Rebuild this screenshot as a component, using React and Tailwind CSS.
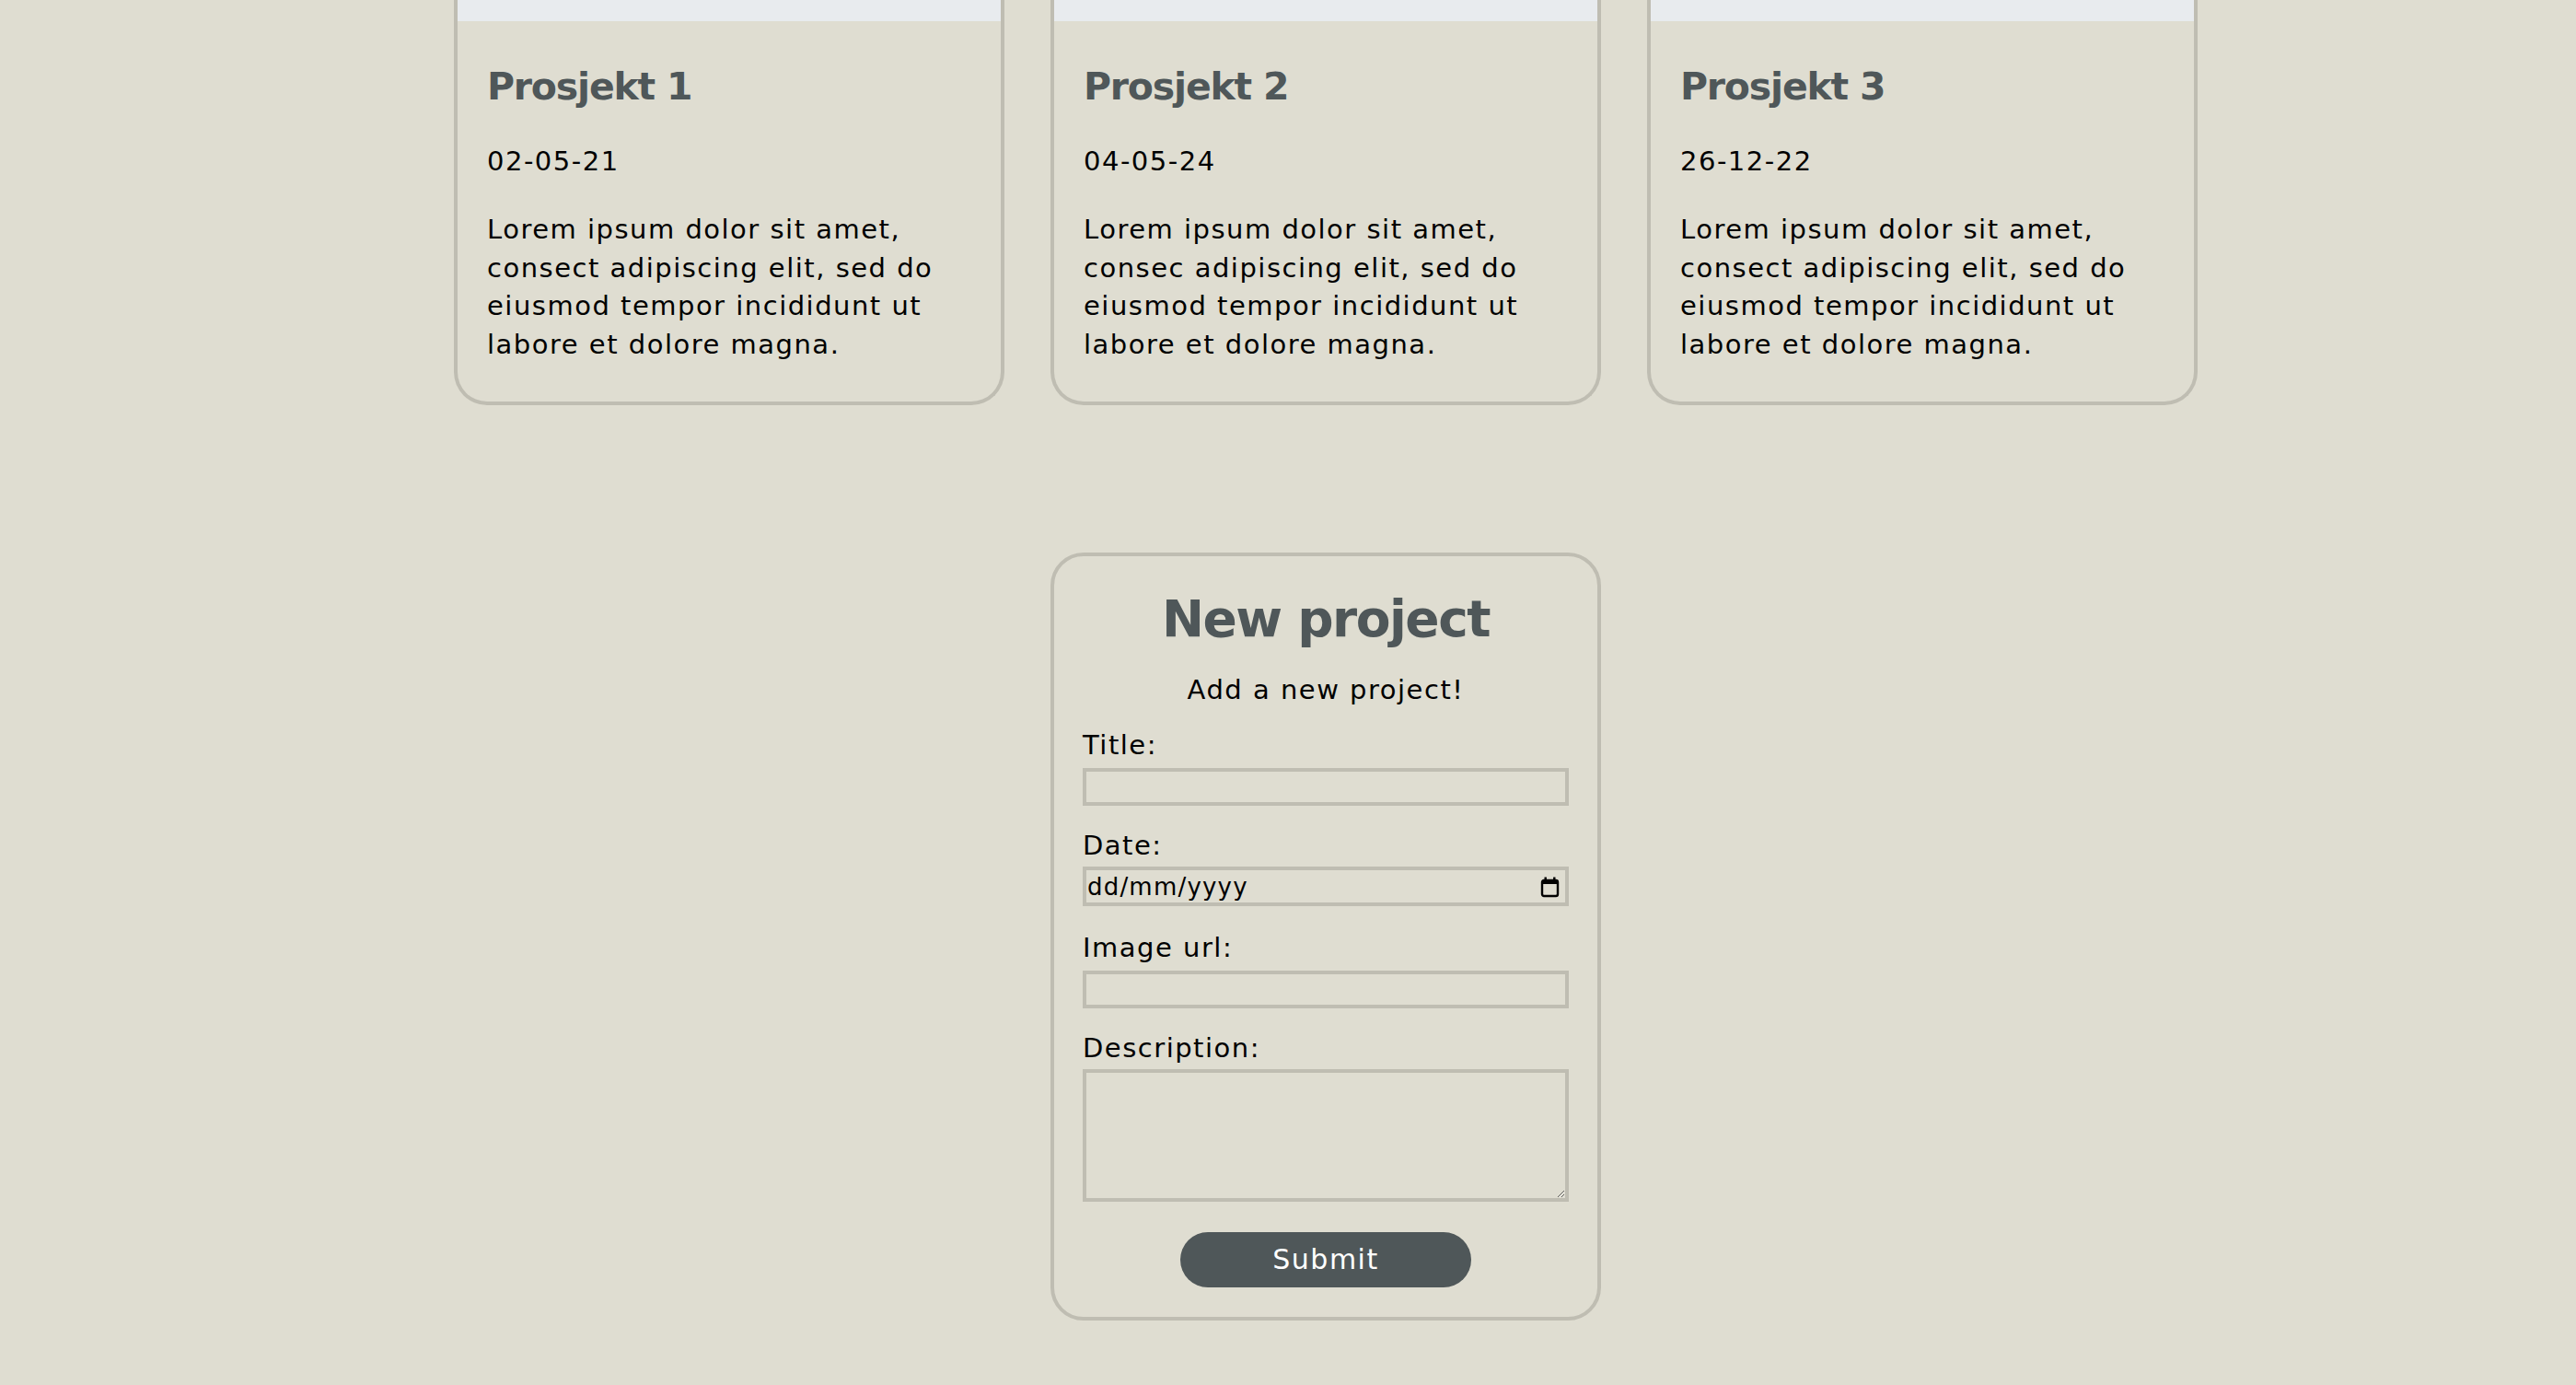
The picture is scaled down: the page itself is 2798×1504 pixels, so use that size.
const projects = [
  {
    title: "Prosjekt 1",
    date: "02-05-21",
    lines: [
      "Lorem ipsum dolor sit amet,",
      "consect adipiscing elit, sed do",
      "eiusmod tempor incididunt ut",
      "labore et dolore magna.",
    ],
  },
  {
    title: "Prosjekt 2",
    date: "04-05-24",
    lines: [
      "Lorem ipsum dolor sit amet,",
      "consec adipiscing elit, sed do",
      "eiusmod tempor incididunt ut",
      "labore et dolore magna.",
    ],
  },
  {
    title: "Prosjekt 3",
    date: "26-12-22",
    lines: [
      "Lorem ipsum dolor sit amet,",
      "consect adipiscing elit, sed do",
      "eiusmod tempor incididunt ut",
      "labore et dolore magna.",
    ],
  },
];

function CalendarIcon() {
  return (
    <svg width="21" height="24" viewBox="0 0 21 24" fill="none">
      <rect x="2" y="5" width="17" height="17" rx="2" stroke="#000" strokeWidth="2.4" />
      <rect x="2" y="5" width="17" height="4" fill="#000" />
      <rect x="4.5" y="1.5" width="2.4" height="4" fill="#000" />
      <rect x="14.1" y="1.5" width="2.4" height="4" fill="#000" />
    </svg>
  );
}

function Card({ p }) {
  return (
    <div className="w-[598px] border-4 border-t-0 border-[#bfbdb2] rounded-b-[36px] overflow-hidden">
      <div className="h-[23px] bg-[#e8ebee]" />
      <div className="px-[32px] pb-[41px]">
        <h2 className="mt-[45px] text-[41px] font-bold leading-[52px] text-[#4f5759] tracking-[-1.2px]">
          {p.title}
        </h2>
        <p className="mt-[34px] leading-[42px]">{p.date}</p>
        <p className="mt-[33px] leading-[41.6px]">
          {p.lines.map((l, i) => (
            <span key={i} className="block whitespace-nowrap">
              {l}
            </span>
          ))}
        </p>
      </div>
    </div>
  );
}

export default function App() {
  return (
    <div className="min-h-screen bg-[#dfddd1] text-black font-['DejaVu_Sans',sans-serif] text-[29px] tracking-[1.5px] flex flex-col items-center pl-[82px]">
      <div className="flex gap-[50px]">
        {projects.map((p) => (
          <Card key={p.title} p={p} />
        ))}
      </div>

      <form
        className="mt-[160px] w-[598px] border-4 border-[#bfbdb2] rounded-[36px] px-[31px] pt-[33px] pb-[32px] flex flex-col"
        onSubmit={(e) => e.preventDefault()}
      >
        <h1 className="text-center text-[55px] font-bold leading-[70px] text-[#4f5759] tracking-[-1.5px]">
          New project
        </h1>
        <p className="mt-[21px] leading-[42px] text-center">Add a new project!</p>

        <label className="mt-[18px] leading-[42px]">Title:</label>
        <input
          type="text"
          className="mt-[4px] h-[41px] border-4 border-[#bfbdb2] bg-transparent outline-none px-[4px]"
        />

        <label className="mt-[22px] leading-[42px]">Date:</label>
        <div className="mt-[2px] h-[43px] border-4 border-[#bfbdb2] flex items-center justify-between pl-[1px] pr-[6px]">
          <span className="text-[26px] tracking-[1.2px] leading-none">dd/mm/yyyy</span>
          <CalendarIcon />
        </div>

        <label className="mt-[24px] leading-[42px]">Image url:</label>
        <input
          type="text"
          className="mt-[4px] h-[41px] border-4 border-[#bfbdb2] bg-transparent outline-none px-[4px]"
        />

        <label className="mt-[22px] leading-[42px]">Description:</label>
        <textarea className="mt-[2px] h-[144px] border-4 border-[#bfbdb2] bg-transparent outline-none" />

        <button
          type="submit"
          className="self-center mt-[33px] w-[316px] h-[60px] rounded-full bg-[#4f5759] text-white text-[30px] leading-none"
        >
          Submit
        </button>
      </form>
    </div>
  );
}
